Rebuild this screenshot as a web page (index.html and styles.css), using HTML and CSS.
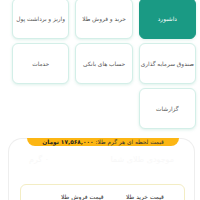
FILE: index.html
```html
<!DOCTYPE html>
<html lang="fa" dir="rtl">
<head>
<meta charset="utf-8">
<link rel="stylesheet" href="styles.css">
</head>
<body>
<div class="grid">
  <div class="tile active">داشبورد</div>
  <div class="tile">خرید و فروش طلا</div>
  <div class="tile">واریز و برداشت پول</div>
  <div class="tile">صندوق سرمایه گذاری</div>
  <div class="tile">حساب های بانکی</div>
  <div class="tile">خدمات</div>
  <div class="tile">گزارشات</div>
</div>
<div class="card">
  <div class="banner">قیمت لحظه ای هر گرم طلا: <b>۱۷,۵۶۸,۰۰۰ تومان</b></div>
  <div class="faded">
    <span>موجودی طلای شما</span>
    <span>۰ گرم</span>
  </div>
  <div class="inner">
    <span>قیمت خرید طلا</span>
    <span>قیمت فروش طلا</span>
  </div>
</div>
</body>
</html>
```
FILE: styles.css
```css
html, body {
  margin: 0;
  padding: 0;
  background: #ffffff;
  font-family: "DejaVu Sans", "Noto Sans", sans-serif;
  overflow: hidden;
}
.grid {
  display: grid;
  grid-template-columns: repeat(3, 1fr);
  grid-auto-rows: 41px;
  gap: 4px 6px;
  padding: 0 4px 0 12px;
  margin-top: -2px;
}
.tile {
  display: flex;
  align-items: center;
  justify-content: center;
  background: #fff;
  border: 1px solid #d3efe8;
  border-radius: 6px;
  box-shadow: 0 1px 3px rgba(60, 170, 140, 0.18);
  font-size: 5.8px;
  color: #555;
  text-align: center;
  white-space: nowrap;
}
.tile.active {
  background: #1a9a84;
  border-color: #1a9a84;
  color: #fff;
}
.card {
  margin: 9px 5px 0 8px;
  border: 1px solid #eeeeee;
  border-bottom: none;
  border-radius: 14px 14px 0 0;
  height: 70px;
  display: flex;
  flex-direction: column;
}
.banner {
  margin: -1px 15px 0 18px;
  height: 17px;
  background: #fcb614;
  border-radius: 0 0 12px 12px;
  display: flex;
  align-items: center;
  justify-content: center;
  font-size: 5.8px;
  color: #333;
  white-space: nowrap;
}
.banner b {
  margin-right: 2px;
  color: #222;
}
.faded {
  display: flex;
  justify-content: space-between;
  padding: 0 20px;
  margin-top: 9px;
  font-size: 8px;
  color: #f8f8f8;
}
.inner {
  margin: 20px 9px 0 11px;
  border: 1px solid #f3edc4;
  border-radius: 6px;
  height: 30px;
  display: flex;
  justify-content: space-between;
  padding: 8px 20px 0 40px;
  font-size: 6px;
  color: #333;
}
```
